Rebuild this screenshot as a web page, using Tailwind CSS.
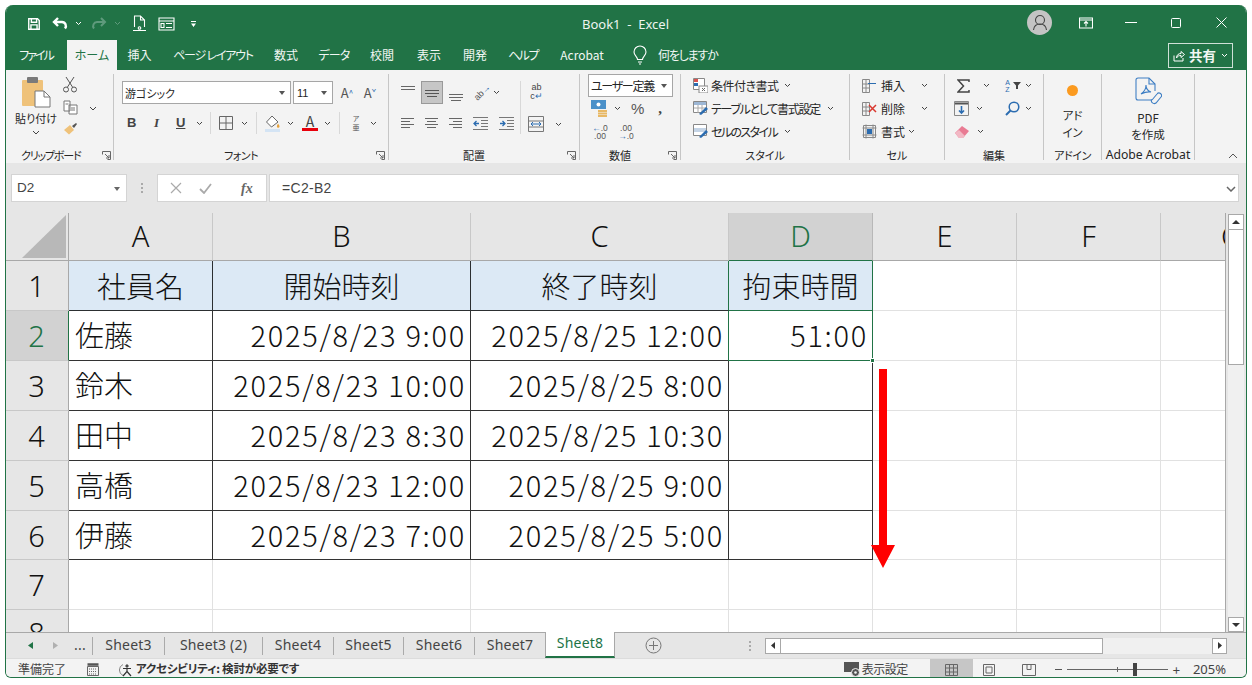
<!DOCTYPE html>
<html lang="ja">
<head>
  <meta charset="UTF-8" />
  <title>Book1 - Excel</title>
  <script src="https://cdn.jsdelivr.net/npm/@tailwindcss/browser@4"></script>
</head>
<body class="bg-white">
<div class="w-[1252px] h-[685px] overflow-hidden bg-white pt-[5px] pl-[5px] font-['Noto_Sans_CJK_JP','Noto_Sans',sans-serif]">
<div class="relative w-[1242px] h-[673px] rounded-t-[8px] rounded-b-[6px] overflow-hidden border border-t-0 border-[#217346] flex flex-col bg-[#e6e6e6]">

  <!-- title bar -->
  <div class="h-[35px] shrink-0 bg-[#217346] flex items-center text-white pl-[22px] pt-[2px] -ml-px">
    <svg class="w-[14px] h-[14px]" viewBox="0 0 16 16" fill="none" stroke="#fff" stroke-width="1.600"><path d="M2 2h10l2 2v10H2z"/><path d="M5 2v4h6V2M4.500 14v-5h7v5"/></svg>
    <svg class="w-[17px] h-[16px] ml-[11px]" viewBox="0 0 17 16" fill="none" stroke="#fff" stroke-width="2.400"><path d="M6 2 2 6l4 4M2 6h8a4 4 0 0 1 3 6.500"/></svg>
    <svg class="w-[7px] h-[5px] ml-[6px]" viewBox="0 0 7 5" fill="none" stroke="#fff"><path d="m1 1 2.500 2.500L6 1"/></svg>
    <svg class="w-[17px] h-[16px] ml-[8px]" viewBox="0 0 17 16" fill="none" stroke="#5f9a7c" stroke-width="2"><path d="m11 2 4 4-4 4M15 6H7a4 4 0 0 0-3 6.500"/></svg>
    <svg class="w-[7px] h-[5px] ml-[7px]" viewBox="0 0 7 5" fill="none" stroke="#5f9a7c"><path d="m1 1 2.500 2.500L6 1"/></svg>
    <svg class="w-[15px] h-[17px] ml-[11px]" viewBox="0 0 15 17" fill="none" stroke="#fff" stroke-width="1.100"><path d="M2.500 12V1h6l4 4v7M8.500 1v4h4M1 15.500h13"/><circle cx="7.500" cy="13" r="1.300"/></svg>
    <svg class="w-[17px] h-[14px] ml-[11px]" viewBox="0 0 17 14" fill="none" stroke="#fff" stroke-width="1.100"><path d="M1 1h15v12H1zM1 4h15M3 6.500h3v4H3zM8 6.500h6M8 10.500h6"/></svg>
    <svg class="w-[7px] h-[6px] ml-[15px]" viewBox="0 0 7 6" fill="#fff"><path d="M1 0h5v1H1zM1 2.500h5L3.500 6z"/></svg>
    <div class="absolute left-[576px] top-[11px] text-[13px] leading-[16px] text-[#eef5f1] font-['Noto_Sans',sans-serif] whitespace-pre">Book1  -  Excel</div>
    <div class="ml-auto flex items-center -mt-[2px]">
      <div class="w-[25px] h-[25px] rounded-full bg-[#c4c4c4] flex items-center justify-center">
        <svg class="w-[16px] h-[17px]" viewBox="0 0 16 17" fill="none" stroke="#444" stroke-width="1.100"><circle cx="8" cy="6" r="4.500"/><path d="M1.500 16c.5-4 3-6 6.500-6s6 2 6.500 6"/></svg>
      </div>
      <svg class="w-[14px] h-[12px] ml-[27px]" viewBox="0 0 14 12" fill="none" stroke="#fff" stroke-width="1.100"><path d="M.5 1h13v10H.5zM.5 3h13M7 9.500V5M5 6.500l2-2 2 2"/></svg>
      <div class="w-[12px] h-px bg-white ml-[32px]"></div>
      <div class="w-[10px] h-[10px] rounded-[1.500px] border border-white ml-[34px]"></div>
      <svg class="w-[11px] h-[11px] ml-[35px] mr-[19px]" viewBox="0 0 11 11" stroke="#fff"><path d="m.5.500 10 10M10.500.500l-10 10"/></svg>
    </div>
  </div>

  <!-- tabs -->
  <div class="h-[30px] shrink-0 bg-[#217346] flex text-[#f2f7f4] text-[12px] leading-[30px] -ml-px [font-feature-settings:'palt']">
    <div class="w-[62px] text-center tracking-[-2px]">ファイル</div>
    <div class="w-[50px] text-center bg-[#f3f3f3] text-[#217346]">ホーム</div>
    <div class="w-[45px] text-center">挿入</div>
    <div class="w-[102px] text-center whitespace-nowrap tracking-[-1.200px]">ページ レイアウト</div>
    <div class="w-[44px] text-center">数式</div>
    <div class="w-[52px] text-center tracking-[-0.7px]">データ</div>
    <div class="w-[44px] text-center">校閲</div>
    <div class="w-[50px] text-center">表示</div>
    <div class="w-[42px] text-center">開発</div>
    <div class="w-[54px] text-center tracking-[-1.500px]">ヘルプ</div>
    <div class="w-[64px] text-center">Acrobat</div>
    <svg class="w-[14px] h-[20px] mt-[5px] ml-[19px]" viewBox="0 0 14 20" fill="none" stroke="#fff" stroke-width="1.100"><path d="M4.500 14.500c0-3-3.500-4-3.500-7.500a6 6 0 0 1 12 0c0 3.500-3.500 4.500-3.500 7.500zM5 17h4M6 19h2"/></svg>
    <div class="ml-[11px] tracking-[-1.200px]">何をしますか</div>
    <div class="ml-auto mr-[13px] mt-[3px] w-[65px] h-[25px] border border-[#cfe0d7] flex items-center justify-center leading-none">
      <svg class="w-[12px] h-[12px]" viewBox="0 0 12 12" fill="none" stroke="#fff"><path d="M1 5.500v5.500h9V8M3.500 8c0-3 2-4.500 4.500-4.500V1.500l3.500 3-3.500 3V5.500C6 5.500 4.500 6 3.500 8z"/></svg>
      <span class="font-bold text-[13.500px] ml-[4px]">共有</span>
      <svg class="w-[7px] h-[5px] ml-[5px]" viewBox="0 0 7 5" fill="none" stroke="#fff"><path d="m1 1 2.500 2.500L6 1"/></svg>
    </div>
  </div>

  <!-- ribbon -->
  <div class="h-[93px] shrink-0 bg-[#f3f3f3] flex text-[#262626] text-[11px] leading-[16px] -ml-px pt-[4px] [font-feature-settings:'palt']">

    <!-- clipboard -->
    <div class="w-[109px] h-[86px] border-r border-[#c6c6c6] flex flex-col">
      <div class="h-[76px] flex">
        <div class="w-[54px] pl-[8px] flex flex-col items-center">
          <svg class="w-[30px] h-[31px] mt-[3px]" viewBox="0 0 30 31"><rect x="1" y="3" width="21" height="26" rx="1" fill="#efc27a"/><rect x="6" y="0" width="11" height="6" rx="1" fill="#7a7a7a"/><path d="M14 14h9l6 6v10H14z" fill="#fff" stroke="#777"/><path d="M23 14v6h6" fill="none" stroke="#777"/></svg>
          <div class="text-[11px] whitespace-nowrap mt-[2px]">貼り付け</div>
          <svg class="w-[8px] h-[5px] mt-[4px]" viewBox="0 0 8 5" fill="none" stroke="#444"><path d="m1 1 3 3 3-3"/></svg>
        </div>
        <div class="w-[22px] flex flex-col items-center gap-[7px]">
          <svg class="w-[14px] h-[16px] mt-[3px]" viewBox="0 0 14 16" fill="none" stroke="#555"><path d="M3 0 9.500 10M11 0 4.500 10"/><circle cx="3" cy="12.500" r="2.500"/><circle cx="11" cy="12.500" r="2.500"/></svg>
          <svg class="w-[15px] h-[15px]" viewBox="0 0 15 15" fill="none" stroke="#777"><path d="M1 1h6v10H1zM6 5h8v9H6z" fill="#fff"/><path d="M8 8h4M8 10h4M2.500 4h3"/></svg>
          <svg class="w-[15px] h-[13px]" viewBox="0 0 15 13"><path d="M1 8 7 3l4 5-5 4.500z" fill="#efc27a"/><path d="m9 4 4-3 1 1-3 4z" fill="#555"/></svg>
        </div>
        <svg class="w-[8px] h-[5px] mt-[32px] ml-[8px]" viewBox="0 0 8 5" fill="none" stroke="#444"><path d="m1 1 3 3 3-3"/></svg>
      </div>
      <div class="flex items-center pl-[16px] pr-[2px] h-[10px] text-[11px]">
        <span class="tracking-[-1.200px]">クリップボード</span>
        <svg class="w-[9px] h-[9px] ml-auto" viewBox="0 0 9 9" fill="none" stroke="#666"><path d="M.5 3.500v-3h8v8h-3M3 3l4 4M7 4v3H4"/></svg>
      </div>
    </div>

    <!-- font -->
    <div class="w-[275px] h-[86px] border-r border-[#c6c6c6] flex flex-col">
      <div class="h-[76px] pl-[8px] flex flex-col">
        <div class="flex items-center mt-[7px] h-[23px]">
          <div class="w-[169px] h-[23px] bg-white border border-[#a6a6a6] flex items-center px-[2px] text-[11px]">
            游ゴシック
            <svg class="w-[6px] h-[4px] ml-auto mr-[3px]" viewBox="0 0 6 4" fill="#555"><path d="M0 0h6L3 4z"/></svg>
          </div>
          <div class="w-[40px] h-[23px] ml-[2px] bg-white border border-[#a6a6a6] flex items-center px-[3px] text-[11px] font-['Liberation_Sans',sans-serif]">
            11
            <svg class="w-[6px] h-[4px] ml-auto mr-[2px]" viewBox="0 0 6 4" fill="#555"><path d="M0 0h6L3 4z"/></svg>
          </div>
          <div class="ml-[6px] w-[16px] text-center text-[13px] text-[#555]">A<span class="text-[8px] align-top text-[#2b6cb0]">^</span></div>
          <div class="ml-[7px] w-[16px] text-center text-[13px] text-[#555]">A<span class="text-[8px] align-top text-[#2b6cb0]">ˇ</span></div>
        </div>
        <div class="flex items-center mt-[7px] h-[24px] text-[#444]">
          <span class="w-[10px] ml-[5px] font-bold text-[13px] font-['Liberation_Sans',sans-serif]">B</span>
          <span class="w-[10px] ml-[17px] font-bold italic text-[13px] font-['Liberation_Serif',serif]">I</span>
          <span class="w-[10px] ml-[12px] font-bold underline text-[13px] font-['Liberation_Sans',sans-serif]">U</span>
          <svg class="w-[7px] h-[5px] ml-[10px]" viewBox="0 0 7 5" fill="none" stroke="#444"><path d="m1 1 2.500 2.500L6 1"/></svg>
          <div class="w-px h-[22px] bg-[#d8d8d8] ml-[7px]"></div>
          <svg class="w-[14px] h-[14px] ml-[8px]" viewBox="0 0 14 14" fill="none" stroke="#666"><path d="M.5.500h13v13H.5zM7 .500v13M.5 7h13"/></svg>
          <svg class="w-[7px] h-[5px] ml-[8px]" viewBox="0 0 7 5" fill="none" stroke="#444"><path d="m1 1 2.500 2.500L6 1"/></svg>
          <div class="w-px h-[22px] bg-[#d8d8d8] ml-[8px]"></div>
          <svg class="w-[16px] h-[17px] ml-[8px]" viewBox="0 0 16 17"><path d="M7 1 1.500 7l5 5L13 7z" fill="#fff" stroke="#666"/><path d="M13 8.500c1 1.500 1.500 2 1.500 3a1.300 1.300 0 0 1-2.600 0c0-1 .5-1.500 1.100-3z" fill="#e8a33d"/><rect x="0" y="14" width="15" height="3" fill="#d4e4f4"/></svg>
          <svg class="w-[7px] h-[5px] ml-[6px]" viewBox="0 0 7 5" fill="none" stroke="#444"><path d="m1 1 2.500 2.500L6 1"/></svg>
          <div class="ml-[8px] w-[16px] flex flex-col items-center leading-[13px] text-[14px] text-[#444]">A<div class="w-[16px] h-[3px] bg-[#e8000b]"></div></div>
          <svg class="w-[7px] h-[5px] ml-[6px]" viewBox="0 0 7 5" fill="none" stroke="#444"><path d="m1 1 2.500 2.500L6 1"/></svg>
          <div class="w-px h-[22px] bg-[#d8d8d8] ml-[8px]"></div>
          <div class="ml-[11px] w-[10px] text-[7px] leading-[9px] text-center text-[#555]">ア<br>亜</div>
          <svg class="w-[7px] h-[5px] ml-[9px]" viewBox="0 0 7 5" fill="none" stroke="#444"><path d="m1 1 2.500 2.500L6 1"/></svg>
        </div>
      </div>
      <div class="flex items-center h-[10px] pr-[3px] text-[11px]">
        <span class="flex-1 text-center pr-[8px] tracking-[-0.5px]">フォント</span>
        <svg class="w-[9px] h-[9px]" viewBox="0 0 9 9" fill="none" stroke="#666"><path d="M.5 3.500v-3h8v8h-3M3 3l4 4M7 4v3H4"/></svg>
      </div>
    </div>

    <!-- alignment -->
    <div class="w-[191px] h-[86px] border-r border-[#c6c6c6] flex flex-col">
      <div class="h-[76px] pl-[12px] flex">
        <div class="w-[119px] flex flex-col">
          <div class="flex items-center mt-[7px] h-[23px]">
            <svg class="w-[14px] h-[8px] mb-[6px]" viewBox="0 0 14 8" stroke="#666"><path d="M0 .500h14M0 3.500h14"/></svg>
            <div class="w-[22px] h-[23px] ml-[6px] bg-[#c6c6c6] border border-[#999] flex items-center justify-center">
              <svg class="w-[14px] h-[8px]" viewBox="0 0 14 8" stroke="#555"><path d="M0 1.500h14M0 4.500h14M2 7.500h10"/></svg>
            </div>
            <svg class="w-[14px] h-[8px] ml-[6px] mt-[8px]" viewBox="0 0 14 8" stroke="#666"><path d="M0 1.500h14M0 4.500h14M2 7.500h10"/></svg>
            <div class="w-[15px] ml-[12px] flex items-center justify-center -rotate-45 text-[9px] leading-none text-[#555] font-['Liberation_Sans',sans-serif] whitespace-nowrap">ab<span class="text-[#2b6cb0]">→</span></div>
            <svg class="w-[7px] h-[5px] ml-[3px]" viewBox="0 0 7 5" fill="none" stroke="#444"><path d="m1 1 2.500 2.500L6 1"/></svg>
          </div>
          <div class="flex items-center mt-[7px] h-[24px] gap-[11px]">
            <svg class="w-[13px] h-[10px]" viewBox="0 0 13 10" stroke="#666"><path d="M0 .500h13M0 3.500h9M0 6.500h13M0 9.500h9"/></svg>
            <svg class="w-[13px] h-[10px]" viewBox="0 0 13 10" stroke="#666"><path d="M0 .500h13M2 3.500h9M0 6.500h13M2 9.500h9"/></svg>
            <svg class="w-[13px] h-[10px]" viewBox="0 0 13 10" stroke="#666"><path d="M0 .500h13M4 3.500h9M0 6.500h13M4 9.500h9"/></svg>
            <svg class="w-[15px] h-[13px]" viewBox="0 0 15 13" fill="none" stroke="#777"><path d="M0 .500h15M8 3.500h7M8 6.500h7M8 9.500h7M0 12.500h15"/><path d="M6 6.500H1M3.500 4 1 6.500 3.500 9" stroke="#2b6cb0" stroke-width="1.300"/></svg>
            <svg class="w-[15px] h-[13px]" viewBox="0 0 15 13" fill="none" stroke="#777"><path d="M0 .500h15M8 3.500h7M8 6.500h7M8 9.500h7M0 12.500h15"/><path d="M1 6.500h5M3.500 4 6 6.500 3.500 9" stroke="#2b6cb0" stroke-width="1.300"/></svg>
          </div>
        </div>
        <div class="w-px h-[53px] bg-[#d8d8d8] mt-[7px]"></div>
        <div class="flex flex-col ml-[7px]">
          <div class="w-[17px] mt-[9px] text-[9px] leading-[9px] text-[#444] font-['Liberation_Sans',sans-serif] text-center">ab<br>c<span class="text-[#2b6cb0]">↵</span></div>
          <div class="flex items-center mt-[15px]">
            <svg class="w-[16px] h-[16px]" viewBox="0 0 16 16" fill="none" stroke="#777"><path d="M.5.500h15v15H.5zM.5 5h15M.5 11h15"/><path d="M3 8h10M5 6 3 8l2 2M11 6l2 2-2 2" stroke="#2b6cb0"/></svg>
            <svg class="w-[7px] h-[5px] ml-[11px]" viewBox="0 0 7 5" fill="none" stroke="#444"><path d="m1 1 2.500 2.500L6 1"/></svg>
          </div>
        </div>
      </div>
      <div class="flex items-center h-[10px] pr-[3px] text-[11px]">
        <span class="flex-1 text-center pr-[8px]">配置</span>
        <svg class="w-[9px] h-[9px]" viewBox="0 0 9 9" fill="none" stroke="#666"><path d="M.5 3.500v-3h8v8h-3M3 3l4 4M7 4v3H4"/></svg>
      </div>
    </div>

    <!-- number -->
    <div class="w-[101px] h-[86px] border-r border-[#c6c6c6] flex flex-col">
      <div class="h-[76px] pl-[8px] flex flex-col">
        <div class="w-[85px] h-[23px] bg-white border border-[#a6a6a6] flex items-center px-[2px] text-[12px] tracking-[-1.300px] whitespace-nowrap">
          ユーザー定義
          <svg class="w-[6px] h-[4px] ml-auto mr-[3px]" viewBox="0 0 6 4" fill="#555"><path d="M0 0h6L3 4z"/></svg>
        </div>
        <div class="flex items-center h-[23px]">
          <svg class="w-[16px] h-[17px] ml-[3px]" viewBox="0 0 16 17"><rect width="15" height="9" fill="#4a90c9"/><circle cx="7.500" cy="4.500" r="2" fill="#fff"/><rect x="7" y="10" width="9" height="2" fill="#e8b864"/><rect x="7" y="12.500" width="9" height="2" fill="#e8b864"/><rect x="7" y="15" width="9" height="2" fill="#e8b864"/></svg>
          <svg class="w-[7px] h-[5px] ml-[7px]" viewBox="0 0 7 5" fill="none" stroke="#444"><path d="m1 1 2.500 2.500L6 1"/></svg>
          <span class="ml-[10px] text-[15px] text-[#555] font-['Liberation_Sans',sans-serif]">%</span>
          <span class="ml-[14px] text-[15px] font-bold text-[#444] font-['Liberation_Serif',serif] leading-none">,</span>
        </div>
        <div class="flex items-center h-[23px] text-[8.500px] leading-[8px] font-['Liberation_Sans',sans-serif] text-[#555]">
          <div class="w-[16px] ml-[4px] text-center"><span class="text-[#2b6cb0]">←</span>.0<br>.00</div>
          <div class="w-[16px] ml-[10px] text-center">.00<br><span class="text-[#2b6cb0]">→</span>.0</div>
        </div>
      </div>
      <div class="flex items-center h-[10px] pr-[3px] text-[11px]">
        <span class="flex-1 text-center pr-[8px]">数値</span>
        <svg class="w-[9px] h-[9px]" viewBox="0 0 9 9" fill="none" stroke="#666"><path d="M.5 3.500v-3h8v8h-3M3 3l4 4M7 4v3H4"/></svg>
      </div>
    </div>

    <!-- styles -->
    <div class="w-[169px] h-[86px] border-r border-[#c6c6c6] flex flex-col">
      <div class="h-[76px] pl-[12px] flex flex-col text-[12px] whitespace-nowrap">
        <div class="flex items-center h-[23px] tracking-[-0.5px]">
          <svg class="w-[15px] h-[15px] mr-[3px]" viewBox="0 0 15 15"><path d="M.5.500h11v11H.5z" fill="#fff" stroke="#888"/><rect x="1" y="1" width="4" height="3" fill="#d9534f"/><rect x="1" y="5" width="4" height="3" fill="#2b6cb0"/><rect x="6" y="8" width="9" height="7" fill="#fff" stroke="#888"/><path d="m9 10 3 3M12 10l-3 3" stroke="#666"/></svg>
          条件付き書式
          <svg class="w-[7px] h-[5px] ml-[5px]" viewBox="0 0 7 5" fill="none" stroke="#444"><path d="m1 1 2.500 2.500L6 1"/></svg>
        </div>
        <div class="flex items-center h-[23px] tracking-[-1.300px]">
          <svg class="w-[16px] h-[15px] mr-[2px]" viewBox="0 0 16 15"><path d="M.5.500h13v11H.5z" fill="#fff" stroke="#888"/><rect x="1" y="1" width="12" height="3" fill="#9db7d5"/><path d="M1 7h12M5 4v8M9 4v8" stroke="#aaa"/><path d="m6 13 7-7 2 2-7 6z" fill="#2b6cb0"/></svg>
          テーブルとして書式設定
          <svg class="w-[7px] h-[5px] ml-[7px]" viewBox="0 0 7 5" fill="none" stroke="#444"><path d="m1 1 2.500 2.500L6 1"/></svg>
        </div>
        <div class="flex items-center h-[23px] tracking-[-1.600px]">
          <svg class="w-[16px] h-[15px] mr-[2px]" viewBox="0 0 16 15"><path d="M.5.500h13v11H.5z" fill="#fff" stroke="#888"/><rect x="1" y="4" width="12" height="4" fill="#c4d4e6"/><path d="m6 13 7-7 2 2-7 6z" fill="#2b6cb0"/></svg>
          セルのスタイル
          <svg class="w-[7px] h-[5px] ml-[7px]" viewBox="0 0 7 5" fill="none" stroke="#444"><path d="m1 1 2.500 2.500L6 1"/></svg>
        </div>
      </div>
      <div class="h-[10px] flex items-center justify-center text-[11px]">スタイル</div>
    </div>

    <!-- cells -->
    <div class="w-[95px] h-[86px] border-r border-[#c6c6c6] flex flex-col">
      <div class="h-[76px] pl-[12px] flex flex-col text-[12px] whitespace-nowrap">
        <div class="flex items-center h-[23px]">
          <svg class="w-[15px] h-[14px] mr-[4px]" viewBox="0 0 15 14" fill="none" stroke="#888"><path d="M.5.500h7v13h-7zM.5 5h7M.5 9h7M4 .500v13"/><path d="M14 4.500H6" stroke="#2b6cb0"/></svg>
          挿入
          <svg class="w-[7px] h-[5px] ml-[16px]" viewBox="0 0 7 5" fill="none" stroke="#444"><path d="m1 1 2.500 2.500L6 1"/></svg>
        </div>
        <div class="flex items-center h-[23px]">
          <svg class="w-[15px] h-[14px] mr-[4px]" viewBox="0 0 15 14" fill="none"><path d="M.5.500h7v13h-7zM.5 5h7M.5 9h7M4 .500v13" stroke="#888"/><path d="m7 3 7 7M14 3l-7 7" stroke="#d9382f" stroke-width="1.500"/></svg>
          削除
          <svg class="w-[7px] h-[5px] ml-[16px]" viewBox="0 0 7 5" fill="none" stroke="#444"><path d="m1 1 2.500 2.500L6 1"/></svg>
        </div>
        <div class="flex items-center h-[23px]">
          <svg class="w-[15px] h-[15px] mr-[4px]" viewBox="0 0 15 15" fill="none" stroke="#888"><path d="M1.500 1.500h12v12h-12zM.5 4h14M.5 11h14M4 .500v14M11 .500v14"/><rect x="5" y="5" width="5" height="5" fill="#2b6cb0" stroke="none"/></svg>
          書式
          <svg class="w-[7px] h-[5px] ml-[3px]" viewBox="0 0 7 5" fill="none" stroke="#444"><path d="m1 1 2.500 2.500L6 1"/></svg>
        </div>
      </div>
      <div class="h-[10px] flex items-center justify-center text-[11px]">セル</div>
    </div>

    <!-- editing -->
    <div class="w-[99px] h-[86px] border-r border-[#c6c6c6] flex flex-col">
      <div class="h-[76px] pl-[12px] flex flex-col">
        <div class="flex items-center h-[23px]">
          <svg class="w-[13px] h-[14px]" viewBox="0 0 13 14" fill="none" stroke="#444" stroke-width="1.500"><path d="M12 3V1H1l5.500 6L1 13h11v-2"/></svg>
          <svg class="w-[7px] h-[5px] ml-[13px]" viewBox="0 0 7 5" fill="none" stroke="#444"><path d="m1 1 2.500 2.500L6 1"/></svg>
          <div class="ml-[13px] w-[9px] text-[7px] leading-[7px] text-center font-['Liberation_Sans',sans-serif] text-[#2b6cb0]">A<br>Z</div>
          <svg class="w-[8px] h-[7px] ml-[1px]" viewBox="0 0 8 7" fill="#444"><path d="M0 0h8L5 3.500V7H3V3.500z"/></svg>
          <svg class="w-[7px] h-[5px] ml-[4px]" viewBox="0 0 7 5" fill="none" stroke="#444"><path d="m1 1 2.500 2.500L6 1"/></svg>
        </div>
        <div class="flex items-center h-[23px]">
          <svg class="w-[15px] h-[15px] -ml-[3px]" viewBox="0 0 15 15" fill="none" stroke="#888"><path d="M.5.500h14v14H.5z"/><path d="M1 2.500h13" stroke="#555" stroke-width="2"/><path d="M7.500 5v7M5 9.500l2.500 2.500L10 9.500" stroke="#2b6cb0" stroke-width="1.600"/></svg>
          <svg class="w-[7px] h-[5px] ml-[7px]" viewBox="0 0 7 5" fill="none" stroke="#444"><path d="m1 1 2.500 2.500L6 1"/></svg>
          <svg class="w-[15px] h-[15px] ml-[22px]" viewBox="0 0 15 15" fill="none" stroke="#2b6cb0" stroke-width="1.500"><circle cx="9" cy="6" r="4.800"/><path d="m5.500 9.500-4.500 4.500" stroke-width="2"/></svg>
          <svg class="w-[7px] h-[5px] ml-[5px]" viewBox="0 0 7 5" fill="none" stroke="#444"><path d="m1 1 2.500 2.500L6 1"/></svg>
        </div>
        <div class="flex items-center h-[23px]">
          <svg class="w-[14px] h-[12px] -ml-[2px]" viewBox="0 0 14 12"><path d="m0 7 7-7 7 5-6 7H4z" fill="#e97b93"/><path d="m0 7 4 5h4l2-2-6-6z" fill="#f2b8c4"/></svg>
          <svg class="w-[7px] h-[5px] ml-[8px]" viewBox="0 0 7 5" fill="none" stroke="#444"><path d="m1 1 2.500 2.500L6 1"/></svg>
        </div>
      </div>
      <div class="h-[10px] flex items-center justify-center text-[11px]">編集</div>
    </div>

    <!-- addins -->
    <div class="w-[58px] h-[86px] border-r border-[#c6c6c6] flex flex-col">
      <div class="h-[76px] flex flex-col items-center">
        <div class="w-[11px] h-[11px] rounded-full bg-[#fb9a1f] mt-[11px]"></div>
        <div class="mt-[11px] text-center text-[11.500px] leading-[17px]">アド<br>イン</div>
      </div>
      <div class="h-[10px] flex items-center justify-center text-[11px] whitespace-nowrap tracking-[-0.4px]">アドイン</div>
    </div>

    <!-- acrobat -->
    <div class="w-[93px] h-[86px] border-r border-[#c6c6c6] flex flex-col">
      <div class="h-[76px] flex flex-col items-center">
        <svg class="w-[27px] h-[30px] mt-[3px]" viewBox="0 0 27 30" fill="none" stroke="#3f7fc4" stroke-width="1.100"><path d="M17 23H3a2 2 0 0 1-2-2V3a2 2 0 0 1 2-2h11l6 6v7"/><path d="M14 1v6h6"/><path d="M6 17c3-2 5-6 5-9 0 3 2 6 5 7-3-.5-7 .5-10 2z"/><path d="m17 23 5-6a2.500 2.500 0 0 1 4 3l-5 6a3 3 0 0 1-4.500-3.500"/></svg>
        <div class="mt-[3px] text-center text-[11.500px] leading-[16px] whitespace-nowrap">PDF<br>を作成</div>
      </div>
      <div class="h-[10px] flex items-center justify-center text-[12.200px] whitespace-nowrap font-['Noto_Sans',sans-serif]">Adobe Acrobat</div>
    </div>

    <div class="flex-1 flex justify-end items-end pb-[1px] pr-[8px] h-[86px]">
      <svg class="w-[10px] h-[6px]" viewBox="0 0 10 6" fill="none" stroke="#555"><path d="m1 5 4-4 4 4"/></svg>
    </div>
  </div>

  <!-- formula bar -->
  <div class="h-[50px] shrink-0 bg-[#e6e6e6] pt-[11px] pl-[6px] pr-[7px] -ml-px flex items-start text-[13px] text-[#444]">
    <div class="w-[116px] h-[28px] bg-white border border-[#d4d4d4] flex items-center pl-[5px] pr-[6px] pt-px font-['Liberation_Sans',sans-serif] text-[13.500px]">
      D2
      <svg class="w-[6px] h-[4px] ml-auto" viewBox="0 0 6 4" fill="#666"><path d="M0 0h6L3 4z"/></svg>
    </div>
    <div class="w-[30px] h-[28px] flex flex-col items-center justify-center gap-[2px]">
      <div class="w-[2px] h-[2px] bg-[#aaa]"></div><div class="w-[2px] h-[2px] bg-[#aaa]"></div><div class="w-[2px] h-[2px] bg-[#aaa]"></div>
    </div>
    <div class="w-[110px] h-[28px] bg-white border border-[#d4d4d4] flex items-center pl-[12px]">
      <svg class="w-[12px] h-[12px]" viewBox="0 0 12 12" stroke="#aaa" stroke-width="1.200"><path d="m1 1 10 10M11 1 1 11"/></svg>
      <svg class="w-[13px] h-[11px] ml-[17px]" viewBox="0 0 13 11" fill="none" stroke="#aaa" stroke-width="1.800"><path d="m1 6 4 4 7-9"/></svg>
      <span class="ml-[29px] italic font-bold text-[14px] text-[#666] font-['Liberation_Serif',serif]">fx</span>
    </div>
    <div class="flex-1 h-[28px] ml-[2px] bg-white border border-[#d4d4d4] flex items-center pl-[12px] pr-[2px] pt-px font-['Liberation_Sans',sans-serif] text-[14px] tracking-[0.3px]">
      =C2-B2
      <svg class="w-[10px] h-[6px] ml-auto" viewBox="0 0 10 6" fill="none" stroke="#666" stroke-width="1.500"><path d="m1 1 4 4 4-4"/></svg>
    </div>
  </div>

  <!-- sheet area -->
  <div class="h-[419px] shrink-0 flex -ml-px">
    <div class="w-[1222px] bg-white overflow-hidden">
      <div class="grid grid-cols-[64px_144px_258px_258px_144px_144px_144px_66px] grid-rows-[48px_50px_50px_50px_50px_50px_49px_50px_22px] text-[29px] leading-none text-[#111] font-light">
        <!-- column headers -->
        <div class="bg-[#e6e6e6] border-r border-b border-[#a8a8a8] flex items-end justify-end pr-[2px] pb-[2px]">
          <svg class="w-[44px] h-[43px]" viewBox="0 0 44 43" fill="#b8b8b8"><path d="M44 0v43H0z"/></svg>
        </div>
        <div class="bg-[#e6e6e6] border-r border-b border-r-[#c8c8c8] border-b-[#a8a8a8] flex items-center justify-center pb-[2px] font-['Noto_Sans',sans-serif]">A</div>
        <div class="bg-[#e6e6e6] border-r border-b border-r-[#c8c8c8] border-b-[#a8a8a8] flex items-center justify-center pb-[2px] font-['Noto_Sans',sans-serif]">B</div>
        <div class="bg-[#e6e6e6] border-r border-b border-r-[#c8c8c8] border-b-[#a8a8a8] flex items-center justify-center pb-[2px] font-['Noto_Sans',sans-serif]">C</div>
        <div class="bg-[#d2d2d2] border-r border-b border-r-[#b8b8b8] border-b-[#217346] flex items-center justify-center pb-[2px] text-[#217346] font-['Noto_Sans',sans-serif]">D</div>
        <div class="bg-[#e6e6e6] border-r border-b border-r-[#c8c8c8] border-b-[#a8a8a8] flex items-center justify-center pb-[2px] font-['Noto_Sans',sans-serif]">E</div>
        <div class="bg-[#e6e6e6] border-r border-b border-r-[#c8c8c8] border-b-[#a8a8a8] flex items-center justify-center pb-[2px] font-['Noto_Sans',sans-serif]">F</div>
        <div class="bg-[#e6e6e6] border-b border-b-[#a8a8a8] overflow-hidden flex items-center pb-[2px] pl-[60px] font-['Noto_Sans',sans-serif]">G</div>

        <!-- row 1 -->
        <div class="bg-[#e6e6e6] border-r border-b border-r-[#a8a8a8] border-b-[#c8c8c8] flex items-center justify-center font-['Noto_Sans',sans-serif]">1</div>
        <div class="bg-[#dce9f5] border-r border-b border-black/80 flex items-center justify-center pb-px">社員名</div>
        <div class="bg-[#dce9f5] border-r border-b border-black/80 flex items-center justify-center pb-px">開始時刻</div>
        <div class="bg-[#dce9f5] border-r border-b border-r-[#217346] border-b-black/80 flex items-center justify-center pb-px">終了時刻</div>
        <div class="bg-[#dce9f5] border-r border-b border-r-[#217346] border-b-[#217346] flex items-center justify-center pb-px">拘束時間</div>
        <div class="border-r border-b border-[#e1e1e1]"></div>
        <div class="border-r border-b border-[#e1e1e1]"></div>
        <div class="border-b border-[#e1e1e1]"></div>

        <!-- row 2 -->
        <div class="bg-[#d2d2d2] border-r border-b border-r-[#217346] border-b-[#c8c8c8] flex items-center justify-center text-[#217346] font-['Noto_Sans',sans-serif]">2</div>
        <div class="border-r border-b border-black/80 flex items-center pl-[6px] pb-[2px]">佐藤</div>
        <div class="border-r border-b border-black/80 flex items-center justify-end pr-[4px] pb-[2px] tracking-[1.700px]">2025/8/23 9:00</div>
        <div class="border-r border-b border-black/80 flex items-center justify-end pr-[4px] pb-[2px] tracking-[1.700px]">2025/8/25 12:00</div>
        <div class="relative border-r border-b border-l border-[#217346] -ml-px flex items-center justify-end pr-[4px] pb-[2px] tracking-[1.700px]">51:00
          <div class="absolute -right-[3px] -bottom-[3px] w-[5px] h-[5px] bg-[#217346] border border-white"></div>
        </div>
        <div class="border-r border-b border-[#e1e1e1]"></div>
        <div class="border-r border-b border-[#e1e1e1]"></div>
        <div class="border-b border-[#e1e1e1]"></div>

        <!-- row 3 -->
        <div class="bg-[#e6e6e6] border-r border-b border-r-[#a8a8a8] border-b-[#c8c8c8] flex items-center justify-center font-['Noto_Sans',sans-serif]">3</div>
        <div class="border-r border-b border-black/80 flex items-center pl-[6px] pb-[2px]">鈴木</div>
        <div class="border-r border-b border-black/80 flex items-center justify-end pr-[4px] pb-[2px] tracking-[1.700px]">2025/8/23 10:00</div>
        <div class="border-r border-b border-black/80 flex items-center justify-end pr-[4px] pb-[2px] tracking-[1.700px]">2025/8/25 8:00</div>
        <div class="border-r border-b border-black/80"></div>
        <div class="border-r border-b border-[#e1e1e1]"></div>
        <div class="border-r border-b border-[#e1e1e1]"></div>
        <div class="border-b border-[#e1e1e1]"></div>

        <!-- row 4 -->
        <div class="bg-[#e6e6e6] border-r border-b border-r-[#a8a8a8] border-b-[#c8c8c8] flex items-center justify-center font-['Noto_Sans',sans-serif]">4</div>
        <div class="border-r border-b border-black/80 flex items-center pl-[6px] pb-[2px]">田中</div>
        <div class="border-r border-b border-black/80 flex items-center justify-end pr-[4px] pb-[2px] tracking-[1.700px]">2025/8/23 8:30</div>
        <div class="border-r border-b border-black/80 flex items-center justify-end pr-[4px] pb-[2px] tracking-[1.700px]">2025/8/25 10:30</div>
        <div class="border-r border-b border-black/80"></div>
        <div class="border-r border-b border-[#e1e1e1]"></div>
        <div class="border-r border-b border-[#e1e1e1]"></div>
        <div class="border-b border-[#e1e1e1]"></div>

        <!-- row 5 -->
        <div class="bg-[#e6e6e6] border-r border-b border-r-[#a8a8a8] border-b-[#c8c8c8] flex items-center justify-center font-['Noto_Sans',sans-serif]">5</div>
        <div class="border-r border-b border-black/80 flex items-center pl-[6px] pb-[2px]">高橋</div>
        <div class="border-r border-b border-black/80 flex items-center justify-end pr-[4px] pb-[2px] tracking-[1.700px]">2025/8/23 12:00</div>
        <div class="border-r border-b border-black/80 flex items-center justify-end pr-[4px] pb-[2px] tracking-[1.700px]">2025/8/25 9:00</div>
        <div class="border-r border-b border-black/80"></div>
        <div class="border-r border-b border-[#e1e1e1]"></div>
        <div class="border-r border-b border-[#e1e1e1]"></div>
        <div class="border-b border-[#e1e1e1]"></div>

        <!-- row 6 -->
        <div class="bg-[#e6e6e6] border-r border-b border-r-[#a8a8a8] border-b-[#c8c8c8] flex items-center justify-center font-['Noto_Sans',sans-serif]">6</div>
        <div class="border-r border-b border-black/80 flex items-center pl-[6px] pb-[2px]">伊藤</div>
        <div class="border-r border-b border-black/80 flex items-center justify-end pr-[4px] pb-[2px] tracking-[1.700px]">2025/8/23 7:00</div>
        <div class="border-r border-b border-black/80 flex items-center justify-end pr-[4px] pb-[2px] tracking-[1.700px]">2025/8/25 5:00</div>
        <div class="border-r border-b border-black/80"></div>
        <div class="border-r border-b border-[#e1e1e1]"></div>
        <div class="border-r border-b border-[#e1e1e1]"></div>
        <div class="border-b border-[#e1e1e1]"></div>

        <!-- row 7 -->
        <div class="bg-[#e6e6e6] border-r border-b border-r-[#a8a8a8] border-b-[#c8c8c8] flex items-center justify-center font-['Noto_Sans',sans-serif]">7</div>
        <div class="border-r border-b border-[#e1e1e1]"></div>
        <div class="border-r border-b border-[#e1e1e1]"></div>
        <div class="border-r border-b border-[#e1e1e1]"></div>
        <div class="border-r border-b border-[#e1e1e1]"></div>
        <div class="border-r border-b border-[#e1e1e1]"></div>
        <div class="border-r border-b border-[#e1e1e1]"></div>
        <div class="border-b border-[#e1e1e1]"></div>

        <!-- row 8, cut off by the tab strip -->
        <div class="bg-[#e6e6e6] border-r border-r-[#a8a8a8] flex items-start justify-center pt-[8px] font-['Noto_Sans',sans-serif]">8</div>
        <div class="border-r border-[#e1e1e1]"></div>
        <div class="border-r border-[#e1e1e1]"></div>
        <div class="border-r border-[#e1e1e1]"></div>
        <div class="border-r border-[#e1e1e1]"></div>
        <div class="border-r border-[#e1e1e1]"></div>
        <div class="border-r border-[#e1e1e1]"></div>
        <div></div>
      </div>
    </div>
    <!-- vertical scrollbar -->
    <div class="flex-1 border-l border-[#a8a8a8] bg-[#e6e6e6] pl-[2px] pr-[2px] flex flex-col">
      <div class="mt-px w-[16px] h-[16px] bg-white border border-[#a8a8a8] flex items-center justify-center shrink-0">
        <svg class="w-[8px] h-[4px]" viewBox="0 0 8 4" fill="#333"><path d="M4 0l4 4H0z"/></svg>
      </div>
      <div class="w-[16px] h-[135px] bg-white border border-t-0 border-[#a8a8a8] shrink-0"></div>
      <div class="flex-1 w-[16px] bg-[#f0f0f0]"></div>
      <div class="w-[16px] h-[15px] bg-white border border-[#a8a8a8] flex items-center justify-center shrink-0">
        <svg class="w-[8px] h-[4px]" viewBox="0 0 8 4" fill="#333"><path d="M0 0h8L4 4z"/></svg>
      </div>
    </div>
  </div>

  <!-- sheet tabs -->
  <div class="h-[26px] shrink-0 border-t border-[#a8a8a8] bg-[#e6e6e6] flex items-center text-[14px] tracking-[0.2px] text-[#444] -ml-px font-['Noto_Sans',sans-serif]">
    <svg class="w-[5px] h-[7px] ml-[23px]" viewBox="0 0 5 7" fill="#217346"><path d="M5 0v7L0 3.500z"/></svg>
    <svg class="w-[5px] h-[7px] ml-[20px]" viewBox="0 0 5 7" fill="#b0b0b0"><path d="M0 0v7l5-3.500z"/></svg>
    <span class="ml-[16px] w-[18px] pb-[3px]">...</span>
    <div class="w-px h-[18px] bg-[#aaa]"></div>
    <div class="w-[71px] text-center pb-[3px]">Sheet3</div>
    <div class="w-px h-[18px] bg-[#aaa]"></div>
    <div class="w-[97px] text-center pb-[3px]">Sheet3 (2)</div>
    <div class="w-px h-[18px] bg-[#aaa]"></div>
    <div class="w-[70px] text-center pb-[3px]">Sheet4</div>
    <div class="w-px h-[18px] bg-[#aaa]"></div>
    <div class="w-[69px] text-center pb-[3px]">Sheet5</div>
    <div class="w-px h-[18px] bg-[#aaa]"></div>
    <div class="w-[70px] text-center pb-[3px]">Sheet6</div>
    <div class="w-px h-[18px] bg-[#aaa]"></div>
    <div class="w-[70px] text-center pb-[3px]">Sheet7</div>
    <div class="w-[70px] h-[26px] -mt-px bg-white border-x border-[#a8a8a8] border-b-2 border-b-[#217346] text-[#217346] text-center leading-[22px]">Sheet8</div>
    <svg class="w-[17px] h-[17px] ml-[30px]" viewBox="0 0 17 17" fill="none" stroke="#777"><circle cx="8.500" cy="8.500" r="7.500"/><path d="M8.500 4v9M4 8.500h9"/></svg>
    <div class="ml-[87px] flex flex-col gap-[2px]">
      <div class="w-[2px] h-[2px] bg-[#aaa]"></div><div class="w-[2px] h-[2px] bg-[#aaa]"></div><div class="w-[2px] h-[2px] bg-[#aaa]"></div>
    </div>
    <div class="ml-[14px] w-[462px] h-[16px] bg-[#f0f0f0] flex">
      <div class="w-[16px] h-[16px] bg-white border border-[#a8a8a8] flex items-center justify-center">
        <svg class="w-[4px] h-[7px]" viewBox="0 0 4 7" fill="#333"><path d="M4 0v7L0 3.500z"/></svg>
      </div>
      <div class="w-[322px] h-[16px] bg-white border border-l-0 border-[#a8a8a8]"></div>
      <div class="ml-auto w-[15px] h-[16px] bg-white border border-[#a8a8a8] flex items-center justify-center">
        <svg class="w-[4px] h-[7px]" viewBox="0 0 4 7" fill="#333"><path d="M0 0v7l4-3.500z"/></svg>
      </div>
    </div>
  </div>

  <!-- status bar -->
  <div class="flex-1 border-t border-[#dcdcdc] bg-[#f3f3f3] -ml-px flex items-center text-[12px] text-[#444] [font-feature-settings:'palt']">
    <span class="ml-[13px] pb-px">準備完了</span>
    <svg class="w-[12px] h-[13px] ml-[21px]" viewBox="0 0 12 13" fill="none" stroke="#666"><path d="M.5 3.500h11v9H.5z"/><path d="M.5 1.500h11" stroke-width="2.500" stroke="#555"/><path d="M2 6h8M2 8.500h8M2 11h8" stroke-dasharray="1 1"/></svg>
    <svg class="w-[15px] h-[14px] ml-[19px]" viewBox="0 0 15 14" fill="none" stroke="#555"><path d="M5 1.500a6 6 0 0 0 0 11" stroke="#888"/><circle cx="9" cy="3" r="1.200" fill="#333"/><path d="M5 5.500h8M9 5.500v3L5 13M9 8.500l4 4.500" stroke="#333" stroke-width="1.200"/></svg>
    <span class="ml-[3px] pb-px font-bold text-[11.500px] tracking-[-0.2px] text-[#333] whitespace-nowrap">アクセシビリティ: 検討が必要です</span>
    <svg class="w-[17px] h-[15px] ml-auto" viewBox="0 0 17 15"><rect y="0" width="15" height="10" fill="#555"/><circle cx="11.500" cy="10.500" r="4" fill="#555" stroke="#f3f3f3"/><circle cx="11.500" cy="10.500" r="1.300" fill="#f3f3f3"/></svg>
    <span class="ml-px pb-px tracking-[-0.5px]">表示設定</span>
    <div class="ml-[22px] w-[43px] h-[21px] bg-[#c6c6c6] flex items-center justify-center">
      <svg class="w-[13px] h-[12px]" viewBox="0 0 13 12" fill="none" stroke="#666"><path d="M.5.500h12v11H.5zM4.500.500v11M8.500.500v11M.5 4h12M.5 8h12"/></svg>
    </div>
    <svg class="w-[12px] h-[12px] ml-[10px]" viewBox="0 0 12 12" fill="none" stroke="#666"><path d="M.5.500h11v11H.5zM3 3h6v6H3z"/></svg>
    <svg class="w-[14px] h-[12px] ml-[27px]" viewBox="0 0 14 12" fill="none" stroke="#666"><path d="M.5.500h13v11H.5zM5 .500v5h4v-5"/></svg>
    <div class="ml-[19px] w-[7px] h-px bg-[#555]"></div>
    <div class="relative ml-[5px] w-[101px] h-px bg-[#666]">
      <div class="absolute left-[50px] -top-[2px] w-px h-[5px] bg-[#666]"></div>
      <div class="absolute left-[66px] -top-[6px] w-[4px] h-[13px] bg-[#444]"></div>
    </div>
    <span class="ml-[5px] text-[13px]">+</span>
    <span class="ml-[13px] mr-[20px] text-[13px] font-['Noto_Sans',sans-serif]">205%</span>
  </div>

  <!-- red arrow drawn over the sheet -->
  <svg class="absolute left-[865px] top-[364px] w-[24px] h-[200px]" viewBox="0 0 24 200" fill="#ff0000"><path d="M8 0h8v176h8l-12 23L0 176h8z"/></svg>
</div>
</div>
</body>
</html>
